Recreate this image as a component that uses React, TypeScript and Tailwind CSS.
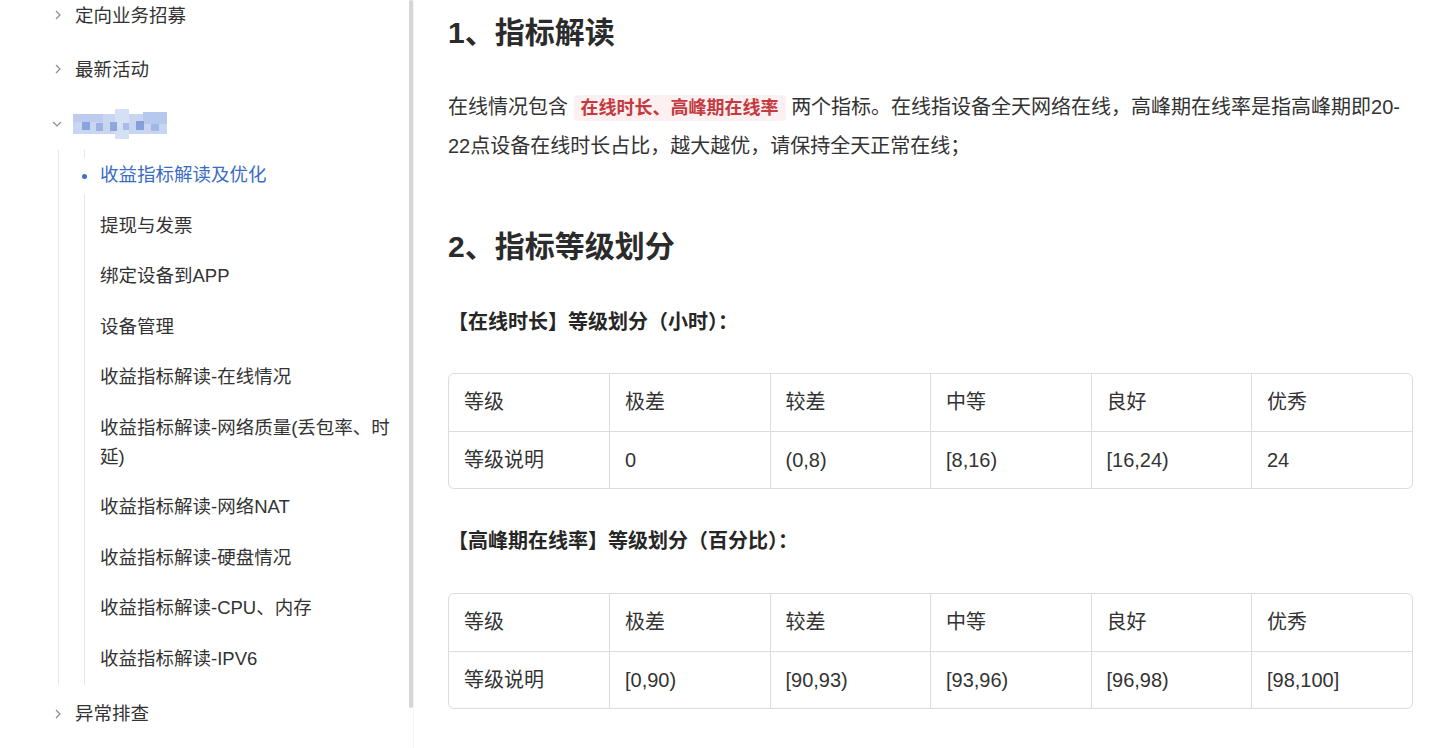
import React from "react";
import clsx from "clsx";

const subItems = [
  "收益指标解读及优化",
  "提现与发票",
  "绑定设备到APP",
  "设备管理",
  "收益指标解读-在线情况",
  "收益指标解读-网络质量(丢包率、时延)",
  "收益指标解读-网络NAT",
  "收益指标解读-硬盘情况",
  "收益指标解读-CPU、内存",
  "收益指标解读-IPV6",
];

const heads = ["等级", "极差", "较差", "中等", "良好", "优秀"];

function Chevron({ down }: { down?: boolean }) {
  if (down) {
    return (
      <svg width="10" height="6" viewBox="0 0 10 6" className="ml-[-1px]">
        <polyline points="1,1 5,5 9,1" fill="none" stroke="#8c8c8c" strokeWidth="1.2" />
      </svg>
    );
  }
  return (
    <svg width="6" height="10" viewBox="0 0 6 10" className="ml-[2px]">
      <polyline points="1,1 5,5 1,9" fill="none" stroke="#8c8c8c" strokeWidth="1.2" />
    </svg>
  );
}

// pixel mosaic over the hidden group name
function Mosaic() {
  return (
    <svg width="94" height="30" viewBox="0 0 94 30">
      <rect x="0" y="5" width="94" height="20" fill="#c9d6f1" />
      <rect x="0" y="5" width="30" height="8" fill="#bccbee" />
      <rect x="42" y="0" width="14" height="30" fill="#d6e0f5" />
      <rect x="70" y="3" width="24" height="12" fill="#b7c8ee" />
      <rect x="9" y="13" width="8" height="8" fill="#8aa3db" />
      <rect x="23" y="14" width="7" height="8" fill="#9db2e2" />
      <rect x="37" y="13" width="7" height="9" fill="#8fa7dc" />
      <rect x="50" y="14" width="6" height="7" fill="#a9bbe6" />
      <rect x="63" y="12" width="8" height="9" fill="#849fda" />
      <rect x="78" y="15" width="8" height="7" fill="#a3b7e4" />
    </svg>
  );
}

function TopItem({ label, down }: { label: string; down?: boolean }) {
  return (
    <div className="flex h-[54px] items-center pl-[53px]">
      <div className="flex w-[22px] items-center">
        <Chevron down={down} />
      </div>
      <span className="text-[18.5px] leading-[29px] text-[#333]">{label}</span>
    </div>
  );
}

function GradeTable({ values }: { values: string[] }) {
  const rows = [heads, ["等级说明", ...values]];
  return (
    <div className="overflow-hidden rounded-[6px] border border-[#dcdcdc]">
      <table className="w-full table-fixed border-collapse text-[20px] text-[#333]">
        <tbody>
          {rows.map((row, r) => (
            <tr key={r} className={clsx(r === 0 && "border-b border-[#dcdcdc]")}>
              {row.map((cell, i) => (
                <td
                  key={i}
                  className={clsx(
                    "h-[57px] px-[15px] align-middle",
                    i < 5 && "border-r border-[#dcdcdc]"
                  )}
                >
                  {cell}
                </td>
              ))}
            </tr>
          ))}
        </tbody>
      </table>
    </div>
  );
}

export default function App() {
  return (
    <div className="flex h-[748px] overflow-hidden bg-white font-['Liberation_Sans','Noto_Sans_CJK_SC',sans-serif] text-[#333]">
      <aside className="relative w-[414px] shrink-0 border-r border-[#f3f3f3]">
        <div className="-mt-[12px]">
          <TopItem label="定向业务招募" />
          <div className="h-[55px]">
            <TopItem label="最新活动" />
          </div>
          <div className="flex h-[54px] items-center pl-[53px]">
            <div className="flex w-[20px] items-center">
              <Chevron down />
            </div>
            <Mosaic />
          </div>
          <div className="-mt-[1px] ml-[58px] border-l border-[#e6e6e6]">
            <ul className="ml-[25px] border-l border-[#e6e6e6]">
              {subItems.map((item, i) => (
                <li key={item} className="relative py-[11px] pl-[15px] pr-[14px] text-[18.5px] leading-[28.6px]">
                  {i === 0 && (
                    <span className="absolute left-[-4px] top-[8px] flex h-[36px] w-[7px] items-center justify-center bg-white">
                      <span className="h-[5px] w-[5px] rounded-full bg-[#3f6fc6]" />
                    </span>
                  )}
                  <span className={clsx(i === 0 ? "text-[#3b6cc4]" : "text-[#333]")}>{item}</span>
                </li>
              ))}
            </ul>
          </div>
          <div className="mt-[2px]">
            <TopItem label="异常排查" />
          </div>
        </div>
        <div className="absolute right-0 top-0 h-[708px] w-[4px] rounded-full bg-[#d6d6d6]" />
      </aside>

      <main className="flex-1 pl-[34px] pr-[27px] pt-[12px]">
        <h2 className="text-[30px] font-semibold leading-[42px] text-[#2b2b2b]">1、指标解读</h2>
        <p className="mt-[34px] text-[20px] leading-[38px] text-[#333]">
          在线情况包含{" "}
          <code className="rounded-[4px] bg-[#fdf0f0] px-[7px] py-[3px] font-['Liberation_Sans','Noto_Sans_CJK_SC',sans-serif] text-[18px] font-semibold text-[#c43a40]">
            在线时长、高峰期在线率
          </code>{" "}
          两个指标。在线指设备全天网络在线，高峰期在线率是指高峰期即20-
          <br />
          22点设备在线时长占比，越大越优，请保持全天正常在线；
        </p>

        <h2 className="mt-[61px] text-[30px] font-semibold leading-[42px] text-[#2b2b2b]">2、指标等级划分</h2>
        <p className="mt-[39px] text-[20px] font-semibold leading-[30px] text-[#262626]">
          【在线时长】等级划分（小时）：
        </p>
        <div className="mt-[36px]">
          <GradeTable values={["0", "(0,8)", "[8,16)", "[16,24)", "24"]} />
        </div>
        <p className="mt-[37px] text-[20px] font-semibold leading-[30px] text-[#262626]">
          【高峰期在线率】等级划分（百分比）：
        </p>
        <div className="mt-[37px]">
          <GradeTable values={["[0,90)", "[90,93)", "[93,96)", "[96,98)", "[98,100]"]} />
        </div>
      </main>
    </div>
  );
}
